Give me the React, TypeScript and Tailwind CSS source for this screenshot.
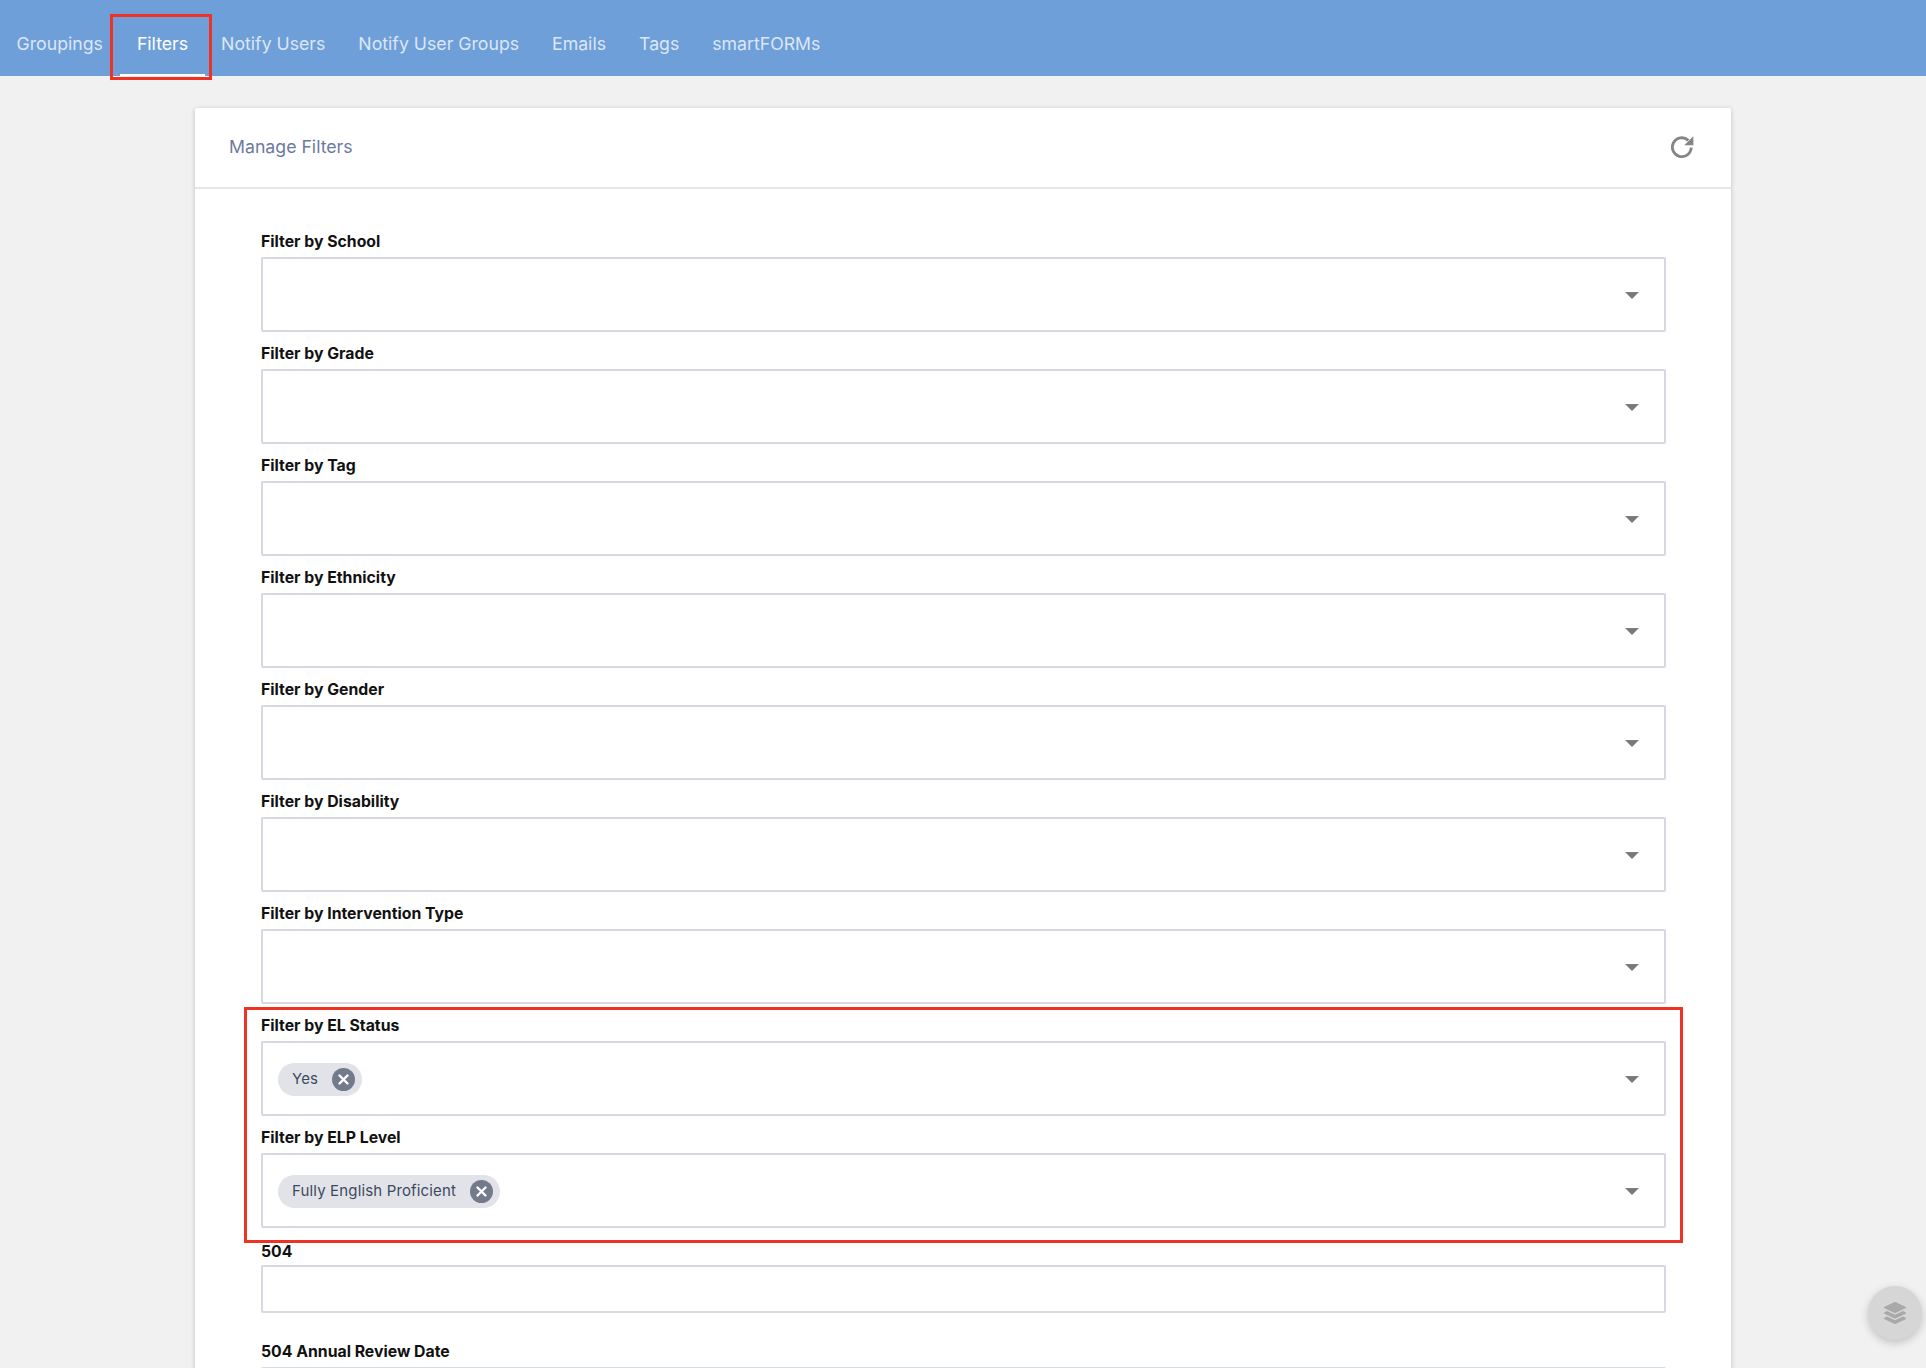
import { FaLayerGroup } from "react-icons/fa";

const tabs = ["Groupings", "Filters", "Notify Users", "Notify User Groups", "Emails", "Tags", "smartFORMs"];

const filters: { label: string; chip?: string }[] = [
  { label: "Filter by School" },
  { label: "Filter by Grade" },
  { label: "Filter by Tag" },
  { label: "Filter by Ethnicity" },
  { label: "Filter by Gender" },
  { label: "Filter by Disability" },
  { label: "Filter by Intervention Type" },
  { label: "Filter by EL Status", chip: "Yes" },
  { label: "Filter by ELP Level", chip: "Fully English Proficient" },
];

function Chip({ text }: { text: string }) {
  return (
    <span className="flex h-[33px] items-center rounded-full bg-[#e1e3e8] pl-[14px] pr-[7px] text-[15px] tracking-[0.15px] text-[#3c4a60]">
      {text}
      <svg className="ml-[14px]" width="23" height="23" viewBox="0 0 23 23">
        <circle cx="11.5" cy="11.5" r="11.5" fill="#737a8c" />
        <path d="M7.5 7.5l8 8M15.5 7.5l-8 8" stroke="#fff" strokeWidth="2.4" strokeLinecap="round" />
      </svg>
    </span>
  );
}

function SelectField({ label, chip }: { label: string; chip?: string }) {
  return (
    <div>
      <div className="h-[37px] pt-[12.5px] text-[15.8px] font-bold leading-[17px] text-[#111]">{label}</div>
      <div className="flex h-[75px] items-center justify-between rounded-[2px] border-2 border-[#d6d8e2] pl-[15px] pr-[25px] pt-[2px]">
        <div>{chip && <Chip text={chip} />}</div>
        <span className="border-x-[7px] border-t-[7px] border-x-transparent border-t-[#7a7a7a]" />
      </div>
    </div>
  );
}

export default function App() {
  return (
    <div className="relative h-[1368px] overflow-hidden bg-[#f1f1f1] font-['Inter',sans-serif]">
      {/* Top nav */}
      <nav className="flex h-[76px] items-stretch bg-[#6f9fd9]">
        {tabs.map((tab) => (
          <div
            key={tab}
            className={
              tab === "Filters"
                ? "ml-[1px] flex items-center border-b-2 border-white px-[16.5px] pt-[15px] text-[17.7px] text-white"
                : "flex items-center border-b-2 border-transparent px-[16.5px] pt-[15px] text-[17.7px] text-white/75"
            }
          >
            {tab}
          </div>
        ))}
      </nav>

      {/* Card */}
      <div className="ml-[195px] mt-[32px] h-[1400px] w-[1536px] rounded-t-[2px] bg-white shadow-[0_1px_5px_rgba(0,0,0,0.2)]">
        <div className="flex h-[81px] items-center justify-between border-b-2 border-[#e4e5e8] pl-[34px] pr-[36px]">
          <span className="text-[17.7px] text-[#6d7a9f]">Manage Filters</span>
          <svg className="-translate-y-[1px]" width="26" height="26" viewBox="0 0 24 24" fill="none">
            <path d="M20.5 12.5a8.7 8.7 0 1 1-2.7-6.6" stroke="#858585" strokeWidth="2.6" />
            <path d="M22.5 2v8.4h-8.4z" fill="#858585" />
          </svg>
        </div>

        <div className="pl-[66px] pr-[65px] pt-[31px]">
          {filters.map((f) => (
            <SelectField key={f.label} label={f.label} chip={f.chip} />
          ))}
          <div className="h-[37px] pt-[15px] text-[15.8px] font-bold leading-[17px] text-[#111]">504</div>
          <div className="h-[48px] rounded-[2px] border-2 border-[#d6d8e2]" />
          <div className="mt-[30px] text-[15.8px] font-bold leading-[17px] text-[#111]">504 Annual Review Date</div>
          <div className="mt-[7px] h-[48px] rounded-[2px] border-2 border-[#d6d8e2]" />
        </div>
      </div>

      {/* Annotation boxes */}
      <div className="absolute left-[110px] top-[14px] h-[66px] w-[102px] border-[3px] border-[#ee3325]" />
      <div className="absolute left-[244px] top-[1007px] h-[236px] w-[1439px] border-[3px] border-[#ee3325]" />

      {/* Floating button */}
      <div className="absolute left-[1868px] top-[1286px] flex h-[54px] w-[54px] items-center justify-center rounded-full bg-[#d6d6d6] shadow-[0_3px_8px_rgba(0,0,0,0.2)]">
        <FaLayerGroup className="text-[22px] text-[#a9a9a9]" />
      </div>
    </div>
  );
}
